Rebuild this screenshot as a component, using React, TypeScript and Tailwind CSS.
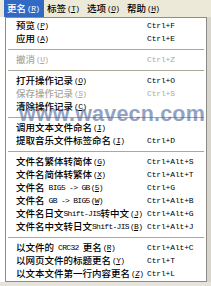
import React from 'react';

type Item =
    | { sep: true }
    | { sep?: false; name: string; acc: string; keys?: string; disabled?: boolean };

const items: Item[] = [
    { name: '预览', acc: 'P', keys: 'Ctrl+F' },
    { name: '应用', acc: 'A', keys: 'Ctrl+E' },
    { sep: true },
    { name: '撤消', acc: 'U', keys: 'Ctrl+Z', disabled: true },
    { sep: true },
    { name: '打开操作记录', acc: 'O', keys: 'Ctrl+O' },
    { name: '保存操作记录', acc: 'S', keys: 'Ctrl+S', disabled: true },
    { name: '清除操作记录', acc: 'C' },
    { sep: true },
    { name: '调用文本文件命名', acc: 'I' },
    { name: '提取音乐文件标签命名', acc: 'I', keys: 'Ctrl+D' },
    { sep: true },
    { name: '文件名繁体转简体', acc: 'G', keys: 'Ctrl+Alt+S' },
    { name: '文件名简体转繁体', acc: 'X', keys: 'Ctrl+Alt+T' },
    { name: '文件名 BIG5 -> GB', acc: '5', keys: 'Ctrl+G' },
    { name: '文件名 GB -> BIG5', acc: 'W', keys: 'Ctrl+Alt+B' },
    { name: '文件名日文Shift-JIS转中文', acc: 'J', keys: 'Ctrl+Alt+G' },
    { name: '文件名中文转日文Shift-JIS', acc: 'B', keys: 'Ctrl+Alt+J' },
    { sep: true },
    { name: '以文件的 CRC32 更名', acc: 'R', keys: 'Ctrl+Alt+C' },
    { name: '以网页文件的标题更名', acc: 'Y', keys: 'Ctrl+T' },
    { name: '以文本文件第一行内容更名', acc: 'Z', keys: 'Ctrl+L' },
];

const top = [
    { name: '更名', acc: 'R', active: true },
    { name: '标签', acc: 'T' },
    { name: '选项', acc: 'O' },
    { name: '帮助', acc: 'H' },
];

// latin runs are half width in the original, so they get their own font
function Rich({ text }: { text: string }) {
    const parts = text.split(/([\x00-\x7f]+)/).filter(Boolean);
    return (
        <>
            {parts.map((p, i) =>
                /^[\x00-\x7f]+$/.test(p) ? (
                    <span
                        key={i}
                        className="whitespace-pre font-['Liberation_Mono',monospace] text-[8px] font-normal tracking-[-0.7px]"
                    >
                        {p}
                    </span>
                ) : (
                    <span key={i}>{p}</span>
                )
            )}
        </>
    );
}

function Label({ name, acc }: { name: string; acc: string }) {
    return (
        <span className="flex items-center whitespace-nowrap">
            <Rich text={name} />
            <span className="ml-[1px] font-['Liberation_Mono',monospace] text-[8px] font-normal tracking-[-0.7px]">
                (<span className="underline underline-offset-1">{acc}</span>)
            </span>
        </span>
    );
}

export default function App() {
    return (
        <div className="relative h-[286px] w-[211px] overflow-hidden bg-[#e6e3da] font-['Noto_Sans_CJK_SC',sans-serif] text-[9.5px] font-medium leading-none text-black">
            <div className="flex h-[17px] bg-[#ece9d8] pl-[4px]">
                {top.map((t) => (
                    <div
                        key={t.name}
                        className={
                            t.active
                                ? 'flex w-[40px] items-center bg-[#316ac5] pl-[3px] text-white'
                                : 'flex w-[40px] items-center pl-[3px]'
                        }
                    >
                        <Label name={t.name} acc={t.acc} />
                    </div>
                ))}
            </div>

            <div className="flex">
                <div className="h-[265px] w-[5px] bg-white" />
                <div className="w-[202px] border border-[#8d8c86] bg-white py-[1px]">
                    {items.map((it, i) =>
                        it.sep ? (
                            <div key={i} className="flex h-[8px] items-center px-[2px]">
                                <div className="h-px w-full bg-[#aca899]" />
                            </div>
                        ) : (
                            <div
                                key={i}
                                className={
                                    it.disabled
                                        ? 'flex h-[13px] items-center pl-[10px] text-[#aca899]'
                                        : 'flex h-[13px] items-center pl-[10px]'
                                }
                            >
                                <div className="w-[131px]">
                                    <Label name={it.name} acc={it.acc} />
                                </div>
                                {it.keys && (
                                    <span className="font-['Liberation_Mono',monospace] text-[8px] font-normal tracking-[-0.15px]">
                                        {it.keys}
                                    </span>
                                )}
                            </div>
                        )
                    )}
                </div>
                <div className="w-[4px] bg-[#d8d5cc]" />
            </div>

            <div className="pointer-events-none absolute left-[19px] top-[104px] font-['Liberation_Sans',sans-serif] text-[21.5px] font-bold tracking-[0.2px] text-[#3d5890] opacity-55">
                www.wavecn.com
            </div>
        </div>
    );
}
